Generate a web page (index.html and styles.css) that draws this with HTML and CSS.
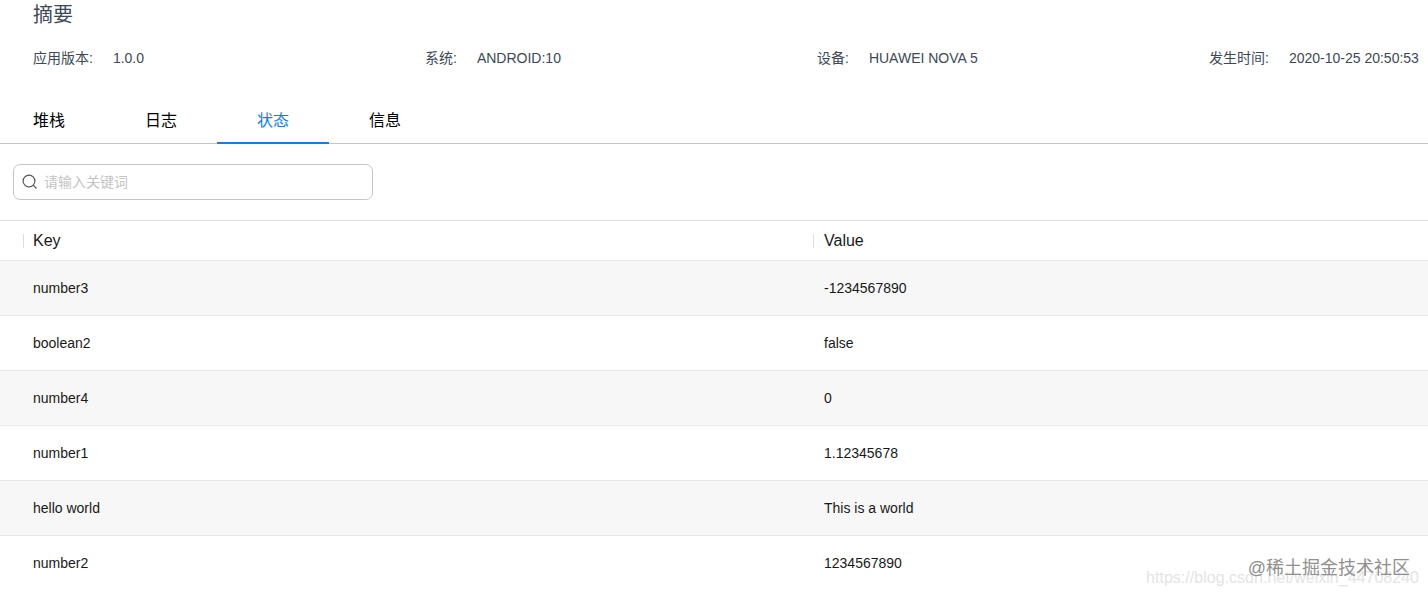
FILE: index.html
```
<!DOCTYPE html>
<html lang="zh-CN">
<head>
<meta charset="utf-8">
<title>摘要</title>
<link rel="stylesheet" href="styles.css">
</head>
<body>
<header class="summary">
  <h1 class="title">摘要</h1>
  <dl class="facts">
    <div class="fact"><dt>应用版本:</dt><dd>1.0.0</dd></div>
    <div class="fact"><dt>系统:</dt><dd>ANDROID:10</dd></div>
    <div class="fact"><dt>设备:</dt><dd>HUAWEI NOVA 5</dd></div>
    <div class="fact"><dt>发生时间:</dt><dd>2020-10-25 20:50:53</dd></div>
  </dl>
</header>
<nav class="tabs">
  <a class="tab">堆栈</a>
  <a class="tab">日志</a>
  <a class="tab active">状态</a>
  <a class="tab">信息</a>
</nav>
<div class="search">
  <svg class="search-icon" viewBox="0 0 16 16"><circle cx="7" cy="7" r="5.9"/><path d="M11.2 11.2 14.5 14.5"/></svg>
  <span class="placeholder">请输入关键词</span>
</div>
<div class="table">
  <div class="row head"><span class="cell">Key</span><span class="cell">Value</span></div>
  <div class="row shade"><span class="cell">number3</span><span class="cell">-1234567890</span></div>
  <div class="row"><span class="cell">boolean2</span><span class="cell">false</span></div>
  <div class="row shade"><span class="cell">number4</span><span class="cell">0</span></div>
  <div class="row"><span class="cell">number1</span><span class="cell">1.12345678</span></div>
  <div class="row shade"><span class="cell">hello world</span><span class="cell">This is a world</span></div>
  <div class="row"><span class="cell">number2</span><span class="cell">1234567890</span></div>
</div>
<div class="watermark-url">https://blog.csdn.net/weixin_44708240</div>
<div class="watermark">@稀土掘金技术社区</div>
</body>
</html>
```
FILE: styles.css
```
* { box-sizing: border-box; }
body {
  margin: 0;
  height: 596px;
  position: relative;
  overflow: hidden;
  background: #fff;
  color: #191919;
  font-family: "Liberation Sans", "Noto Sans CJK SC", sans-serif;
  font-size: 14px;
}
.summary { height: 97px; padding-left: 33px; color: #3d4956; }
.title { margin: 0; height: 48px; padding-top: 1px; font-size: 20px; line-height: 28px; font-weight: 400; }
.facts { display: flex; margin: 0; line-height: 20px; }
.fact { display: flex; flex: 0 0 392px; gap: 20px; white-space: nowrap; }
.fact:last-child { flex: 0 0 auto; }
dd { margin: 0; }
.tabs { display: flex; height: 47px; border-bottom: 1px solid #c6c6c6; color: #000; }
.tab { width: 112px; height: 47px; padding-left: 40px; font-size: 16px; line-height: 47px; }
.tab:first-child { width: 105px; padding-left: 33px; }
.tab.active { color: #1080e6; border-bottom: 2px solid #1080e6; }
.search { display: flex; align-items: center; width: 360px; height: 36px; margin: 20px 0 20px 13px; padding-left: 8px; border: 1px solid #c6c6c6; border-radius: 7px; color: #c4c4c4; }
.search-icon { width: 16px; height: 16px; margin-right: 6px; fill: none; stroke: #555; stroke-width: 1.2; }
.placeholder { padding-bottom: 2px; }
.row { display: grid; grid-template-columns: 791px 1fr; align-items: center; height: 55px; padding-left: 33px; border-bottom: 1px solid #e8e8e8; }
.row:last-child { border-bottom-color: transparent; }
.shade { background: #f7f7f7; }
.head { height: 41px; border-top: 1px solid #dfdfdf; font-size: 16px; }
.head .cell { margin-left: -10px; padding-left: 9px; border-left: 1px solid #ddd; line-height: 14px; }
.head .cell:last-child { margin-left: -11px; padding-left: 10px; }
.watermark-url { position: absolute; right: 9px; top: 568px; font-size: 16px; line-height: 20px; letter-spacing: .02px; color: #e4e4e4; }
.watermark { position: absolute; right: 18px; top: 556px; font-size: 18px; line-height: 24px; color: #909090; }
```
